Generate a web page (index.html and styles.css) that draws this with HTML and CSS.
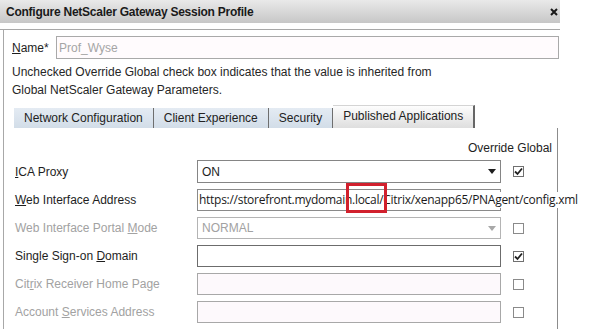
FILE: index.html
```html
<!DOCTYPE html>
<html lang="en">
<head>
    <meta charset="UTF-8">
    <title>Configure NetScaler Gateway Session Profile</title>
    <link rel="stylesheet" href="styles.css">
</head>
<body>
    <div class="dialog">
        <div class="titlebar">
            <span class="title">Configure NetScaler Gateway Session Profile</span>
            <svg class="close" width="8" height="8" viewBox="0 0 8 8"><path d="M1 1 L7 7 M7 1 L1 7" stroke="#1a1a1a" stroke-width="2"/></svg>
        </div>

        <div class="frame">
            <div class="frame-inner">
                <div class="name-row">
                    <span class="name-label"><u>N</u>ame*</span>
                    <div class="field name-field">Prof_Wyse</div>
                </div>

                <p class="note">Unchecked Override Global check box indicates that the value is inherited from<br>Global NetScaler Gateway Parameters.</p>

                <div class="tabs">
                    <div class="tab">Network Configuration</div>
                    <div class="tab">Client Experience</div>
                    <div class="tab">Security</div>
                    <div class="tab active">Published Applications</div>
                </div>

                <div class="panel">
                    <div class="override">Override Global</div>

                    <div class="row">
                        <span class="label"><u>I</u>CA Proxy</span>
                        <div class="field select">ON<span class="arrow"></span></div>
                        <span class="check on"><svg width="9" height="9" viewBox="0 0 9 9"><path d="M1 4.5 L3.5 7 L8 1.5" fill="none" stroke="#222" stroke-width="1.8"/></svg></span>
                    </div>

                    <div class="row">
                        <span class="label"><u>W</u>eb Interface Address</span>
                        <div class="field url-field"><span class="url">https://storefront.mydomain.local/Citrix/xenapp65/PNAgent/config.xml</span></div>
                    </div>

                    <div class="row disabled">
                        <span class="label">Web Interface Portal <u>M</u>ode</span>
                        <div class="field select">NORMAL<span class="arrow"></span></div>
                        <span class="check"></span>
                    </div>

                    <div class="row">
                        <span class="label">Single Sign-on <u>D</u>omain</span>
                        <div class="field dark"></div>
                        <span class="check on"><svg width="9" height="9" viewBox="0 0 9 9"><path d="M1 4.5 L3.5 7 L8 1.5" fill="none" stroke="#222" stroke-width="1.8"/></svg></span>
                    </div>

                    <div class="row disabled">
                        <span class="label">Cit<u>r</u>ix Receiver Home Page</span>
                        <div class="field pink"></div>
                        <span class="check"></span>
                    </div>

                    <div class="row disabled">
                        <span class="label">Account <u>S</u>ervices Address</span>
                        <div class="field pink"></div>
                        <span class="check"></span>
                    </div>
                </div>
            </div>
        </div>

        <!-- red annotation box -->
        <div class="mark"></div>
    </div>
</body>
</html>
```

FILE: styles.css
```css
body {
    margin: 0;
    background: #fff;
    font-family: "Liberation Sans", Arial, sans-serif;
    font-size: 12px;
    color: #1e1e1e;
}

.dialog {
    position: relative;
    width: 560px;
}

.titlebar {
    height: 23px;
    display: flex;
    align-items: center;
    justify-content: space-between;
    padding: 0 2px 0 6px;
    background: linear-gradient(#e9e9e9, #c7c7c7);
}
.title {
    font-weight: bold;
    font-size: 12px;
    letter-spacing: -0.25px;
    color: #1a1a1a;
}

.frame {
    margin-top: 6px;
    border-top: 1px solid #a8a8a8;
    height: 300px;
}
.frame-inner {
    margin-left: 3px;
    border-left: 1px solid #a8a8a8;
    padding-left: 8px;
    height: 100%;
}

.name-row {
    display: flex;
    align-items: center;
    padding-top: 6px;
}
.name-label {
    width: 44px;
}

.field {
    box-sizing: border-box;
    height: 22px;
    border: 1px solid #a9a9a9;
    background: #fff;
    display: flex;
    align-items: center;
    padding-left: 4px;
    white-space: nowrap;
}
.name-field {
    width: 503px;
    height: 23px;
    padding-left: 2px;
    background: #fffbfd;
    color: #a5a5a5;
}

.note {
    margin: 4px 0 0;
    line-height: 18px;
    color: #262626;
}

.tabs {
    display: flex;
    align-items: flex-end;
    height: 24px;
    margin: 5px 0 0 2px;
}
.tab {
    height: 20px;
    line-height: 20px;
    padding: 0 10px;
    background: linear-gradient(#e4ebf3, #d2dde8);
    border-right: 1px solid #6e6e6e;
    box-shadow: 1px 0 0 #fff;
    color: #222;
}
.tab.active {
    height: 23px;
    line-height: 21px;
    box-sizing: border-box;
    background: linear-gradient(#fdfdfd, #dedede);
    border-top: 1px solid #d4d4d4;
    border-right: 2px solid #666;
    box-shadow: none;
}

.panel {
    width: 546px;
    height: 210px;
    border-right: 1px solid #8c8c8c;
    padding-left: 3px;
    box-sizing: border-box;
}

.override {
    text-align: right;
    padding-right: 5px;
    padding-top: 12px;
    line-height: 16px;
}

.row {
    display: flex;
    align-items: center;
    height: 22px;
    margin-top: 6px;
}
.override + .row {
    margin-top: 4px;
    height: 23px;
}
.label {
    width: 182px;
}
.row .field {
    width: 304px;
    height: 100%;
}
.disabled .label,
.disabled .field {
    color: #a2a2a2;
}

.select {
    justify-content: space-between;
    border-color: #858585;
}
.disabled .select {
    border-color: #b4b4b4;
}
.arrow {
    width: 0;
    height: 0;
    margin-right: 4px;
    border-left: 4px solid transparent;
    border-right: 4px solid transparent;
    border-top: 5px solid #1e1e1e;
}
.disabled .arrow {
    border-top-color: #a8a8a8;
}

.field.dark {
    border-color: #6c6c6c;
}
.field.pink {
    background: #fdf9fc;
    border-color: #a8a8a8;
}

.url-field {
    padding-left: 1px;
    border-color: #8a8a8a;
    overflow: visible;
}
.url {
    background: #fff;
    font-family: "Open Sans", "Noto Sans", sans-serif;
    font-size: 12px;
    letter-spacing: -0.28px;
    line-height: 16px;
    color: #1a1a1a;
}

.check {
    box-sizing: border-box;
    width: 11px;
    height: 11px;
    margin-left: 12px;
    border: 1px solid #707070;
    background: #fff;
    display: flex;
    align-items: center;
    justify-content: center;
}
.disabled .check {
    border-color: #8a8a8a;
}

.mark {
    position: absolute;
    left: 346px;
    top: 183px;
    width: 41px;
    height: 30px;
    box-sizing: border-box;
    border: 3px solid #d1202d;
}
```
